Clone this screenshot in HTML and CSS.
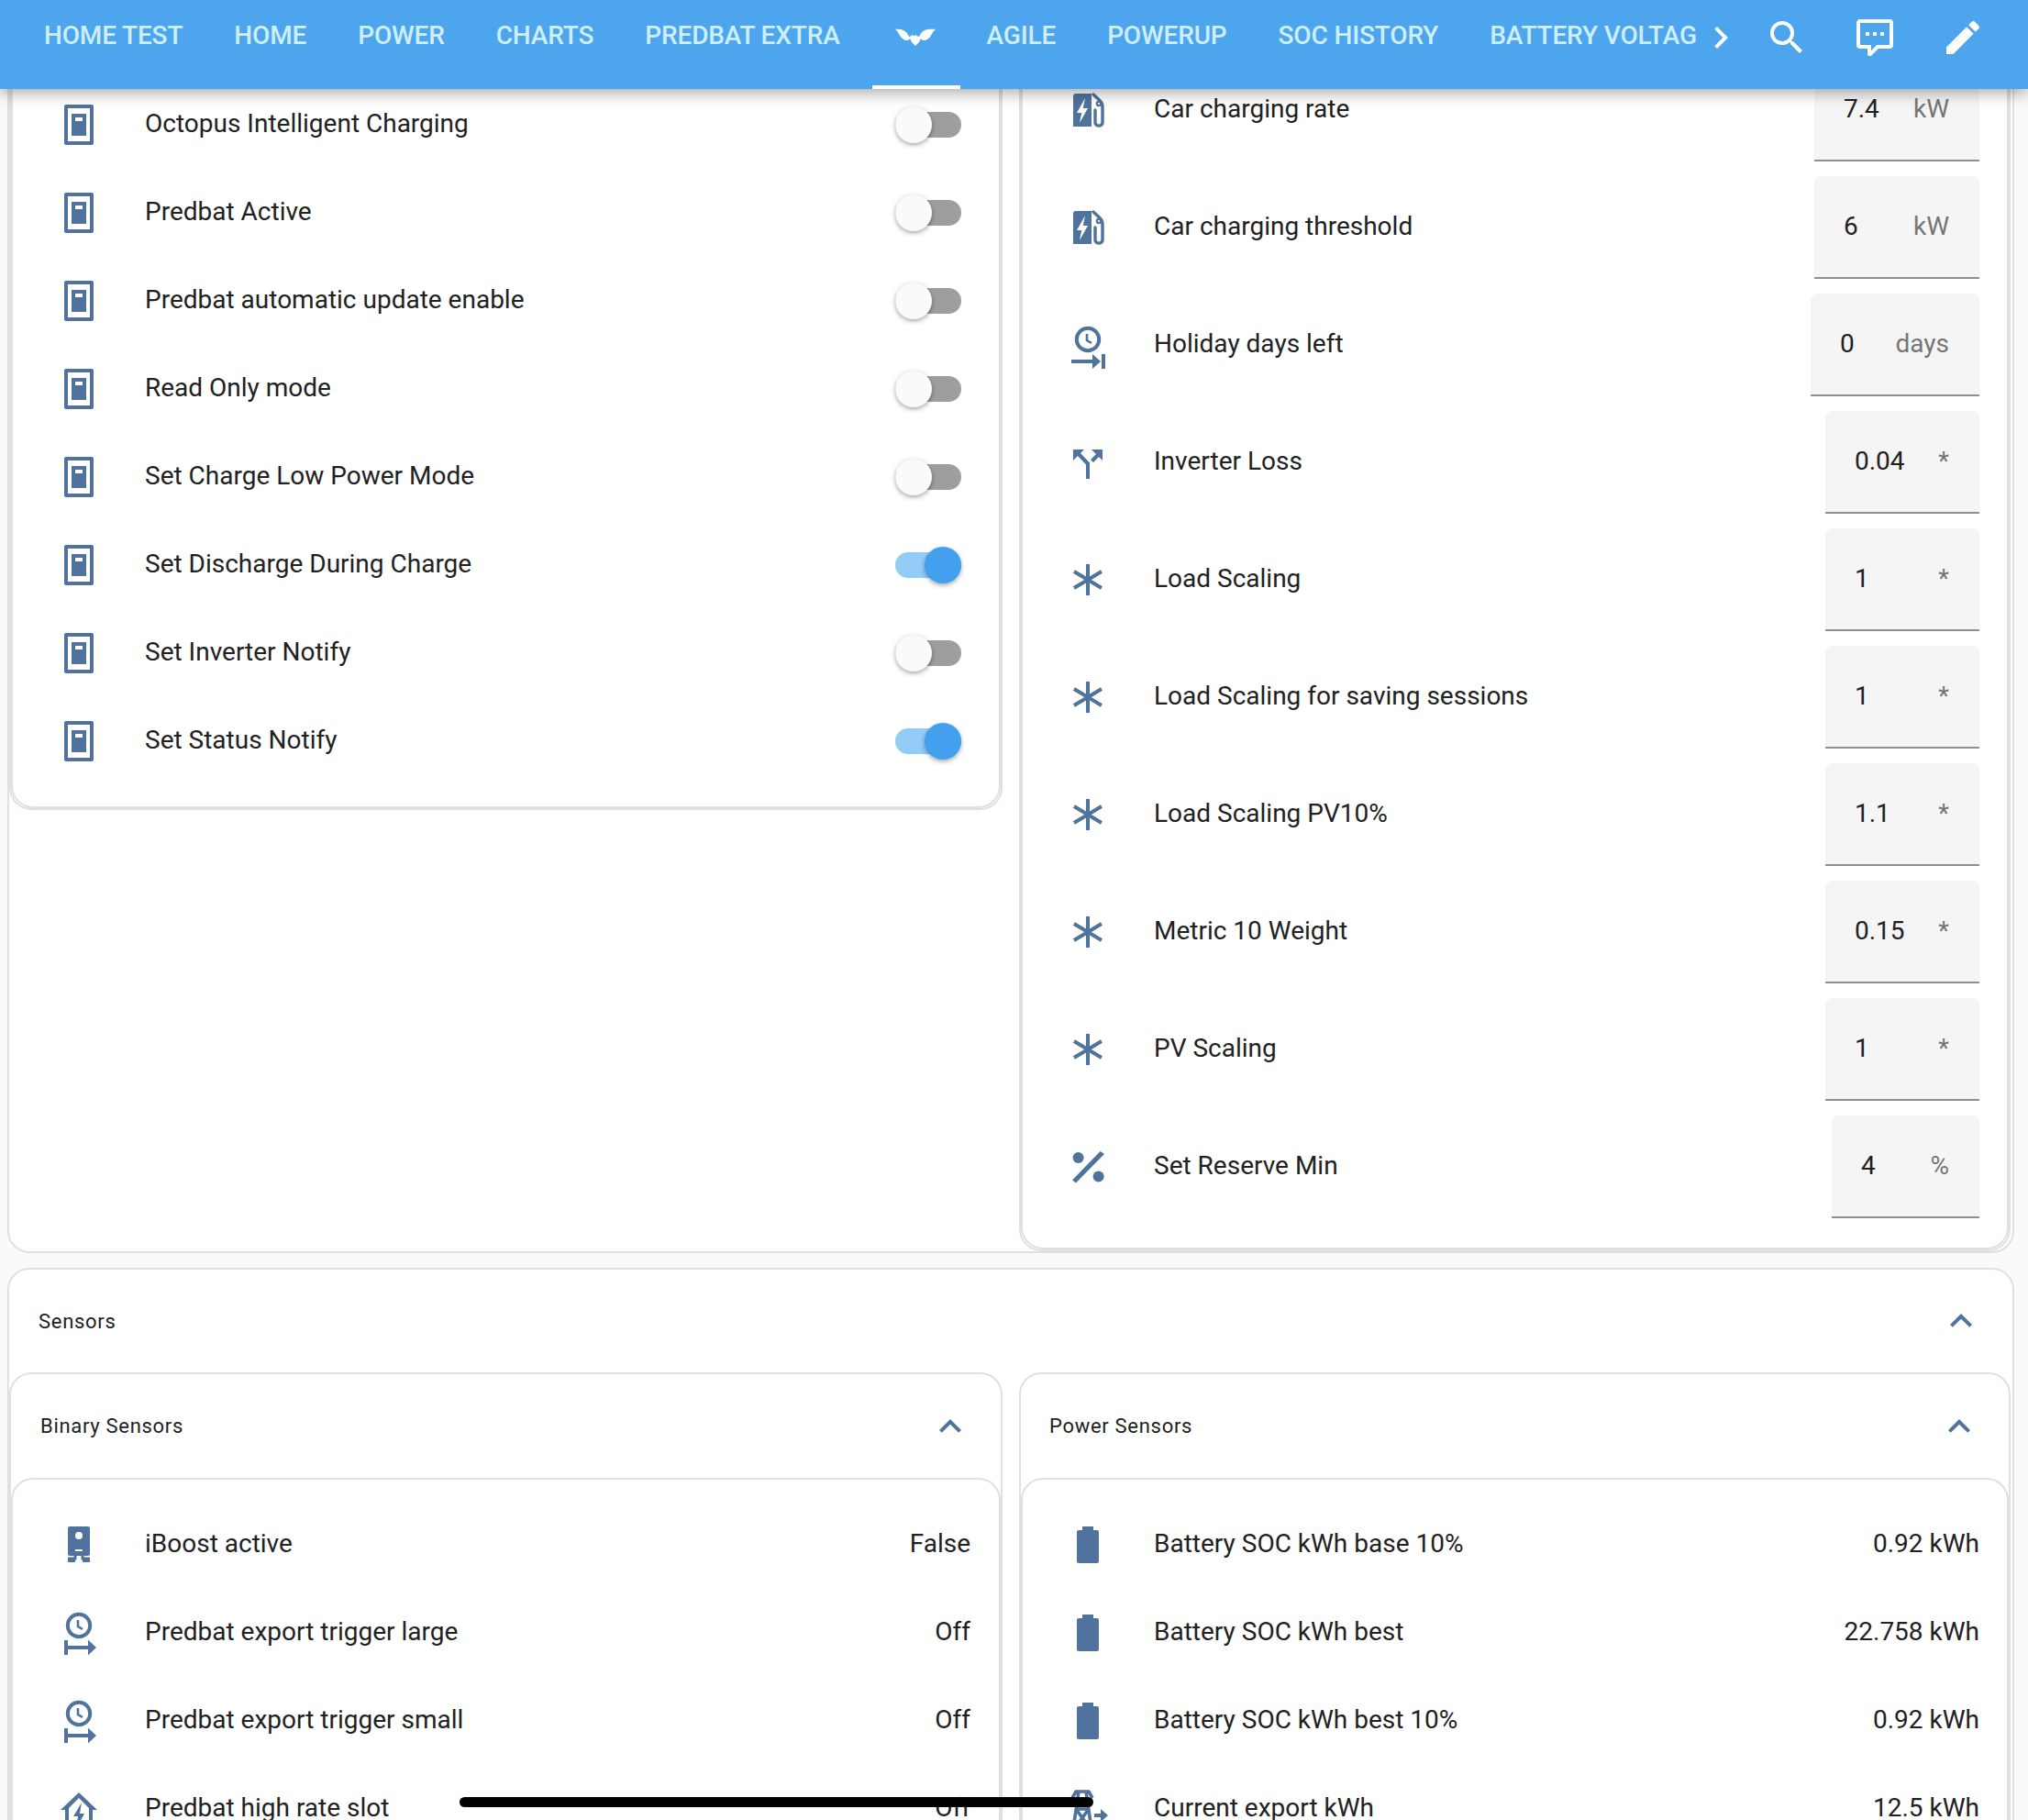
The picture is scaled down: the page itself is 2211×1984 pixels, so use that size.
FILE: index.html
```html
<!DOCTYPE html>
<html lang="en">
<head>
<meta charset="utf-8">
<title>Predbat</title>
<link rel="stylesheet" href="styles.css">
</head>
<body>
<svg class="defs" width="0" height="0" aria-hidden="true">
  <symbol id="i-switch" viewBox="0 0 24 24">
    <path fill-rule="evenodd" d="M5 1h14a1 1 0 0 1 1 1v20a1 1 0 0 1-1 1H5a1 1 0 0 1-1-1V2a1 1 0 0 1 1-1zm1 2v18h12V3zM8 6h8v12H8zm2 2v2h4V8z"/>
  </symbol>
  <symbol id="i-ev" viewBox="0 0 24 24">
    <path fill-rule="evenodd" d="M5.500 3H14v18H4V4.500A1.500 1.500 0 0 1 5.500 3zM10.500 5.500L6 13.500H8.600L7.500 19 12 11H9.400z"/>
    <path fill="none" stroke="currentColor" stroke-width="1.700" stroke-linecap="round" d="M15 3.500l3.500 3.200c1 1 1.500 1.800 1.500 3v9c0 2.500-4 2.500-4 0v-6.700"/>
    <circle cx="18" cy="8.500" r="1.100" fill="none" stroke="currentColor" stroke-width="1.100"/>
  </symbol>
  <symbol id="i-clock-in" viewBox="0 0 24 24" overflow="visible">
    <circle cx="12" cy="9" r="6.100" fill="none" stroke="currentColor" stroke-width="2"/>
    <path fill="none" stroke="currentColor" stroke-width="1.300" d="M11.500 6v3.500l2.500 1.500"/>
    <path d="M3 20h11.500v-3l4.500 4-4.500 4v-3H3zM19.500 17h2v8h-2z"/>
  </symbol>
  <symbol id="i-clock-out" viewBox="0 0 24 24" overflow="visible">
    <circle cx="12" cy="9" r="6.100" fill="none" stroke="currentColor" stroke-width="2"/>
    <path fill="none" stroke="currentColor" stroke-width="1.300" d="M11.500 6v3.500l2.500 1.500"/>
    <path d="M4 17h2v3h11v-3.200l4.500 4.200-4.500 4.200V22H6v3H4z"/>
  </symbol>
  <symbol id="i-split" viewBox="0 0 24 24">
    <path d="M4 5h6L8 7l5 5.300V21h-2v-7.800L6.500 8.500 4 11zM14 5h6v6l-2-2-3 3-1.500-1.500 3-3z"/>
  </symbol>
  <symbol id="i-star" viewBox="0 0 24 24">
    <path fill="none" stroke="currentColor" stroke-width="2" d="M12 3.500v17M4.500 7.500l15 9M19.500 7.500l-15 9"/>
  </symbol>
  <symbol id="i-percent" viewBox="0 0 24 24">
    <circle cx="6.800" cy="7" r="3"/>
    <circle cx="17.800" cy="17.300" r="3"/>
    <path d="M18.800 3.500L21 5 5.500 20.800 3.500 19.200z"/>
  </symbol>
  <symbol id="i-boost" viewBox="0 0 24 24">
    <path fill-rule="evenodd" d="M7 3h10a1 1 0 0 1 1 1v14a1 1 0 0 1-1 1H7a1 1 0 0 1-1-1V4a1 1 0 0 1 1-1zm5 3a2 2 0 1 0 0 4 2 2 0 0 0 0-4zm-2 9.500v1h4v-1z"/>
    <path fill="none" stroke="currentColor" stroke-width="1.500" d="M10 19v1.500H6M14 19v1.500h4"/>
    <path d="M6 20.500h4v2H6zM14 20.500h4v2h-4z"/>
  </symbol>
  <symbol id="i-battery" viewBox="0 0 24 24">
    <path d="M9 3h6v2h2a1 1 0 0 1 1 1v16a1 1 0 0 1-1 1H7a1 1 0 0 1-1-1V6a1 1 0 0 1 1-1h2z"/>
  </symbol>
  <symbol id="i-homebolt" viewBox="0 0 24 24">
    <path fill-rule="evenodd" d="M12 4l10 9.500h-2.500V24h-2V12.500L12 7 6.500 12.500V24h-2V13.500H2z"/>
    <path d="M13.500 9.500L9 17h2.500l-1 7L15 15.500h-2.500z"/>
  </symbol>
  <symbol id="i-tower" viewBox="0 0 24 24">
    <path fill="none" stroke="currentColor" stroke-width="1.800" d="M3.500 7l2-3.500h7l2 3.500M7 3.500L4 24M11 3.500L14 24M5.500 13h7M4.500 24l8-11M13.500 24l-8-11"/>
    <path d="M15.500 15.500h3.500v-2.500l4 3.500-4 3.500v-2.500h-3.500z"/>
  </symbol>
</svg>

<div class="view">
  <header class="topbar">
    <nav class="tabs">
      <a class="tab">Home Test</a>
      <a class="tab">Home</a>
      <a class="tab">Power</a>
      <a class="tab">Charts</a>
      <a class="tab">Predbat Extra</a>
      <a class="tab tab-icon">
        <svg class="ico48" viewBox="0 0 48 48"><path fill="#fff" d="M1 15q7-1 11 1 4 2 6 7l3-1 .8-2 .7 2h2l.8-2 .7 2 3 1q2-5 6-7 4-2 12-1-2 1-4 5-3 6-8 7-3 .5-4-2l-2 4-4 4-4-4-2-4q-1 2.500-4 2-5-1-8-7-2-4-4-5z"/></svg>
      </a>
      <a class="tab">Agile</a>
      <a class="tab">PowerUp</a>
      <a class="tab">SOC History</a>
      <a class="tab">Battery Voltag</a>
    </nav>
    <button class="scroll-btn"><svg class="ico48" viewBox="0 0 24 24"><path d="M8.590,16.580L13.170,12L8.590,7.410L10,6L16,12L10,18L8.590,16.580Z"/></svg></button>
    <button class="act-btn"><svg class="ico48" viewBox="0 0 24 24"><path d="M9.500,3A6.500,6.500 0 0,1 16,9.500C16,11.110 15.410,12.590 14.440,13.730L14.710,14H15.500L20.500,19L19,20.500L14,15.500V14.710L13.730,14.440C12.590,15.410 11.110,16 9.500,16A6.500,6.500 0 0,1 3,9.500A6.500,6.500 0 0,1 9.500,3M9.500,5C7,5 5,7 5,9.500C5,12 7,14 9.500,14C12,14 14,12 14,9.500C14,7 12,5 9.500,5Z"/></svg></button>
    <button class="act-btn"><svg class="ico48" viewBox="0 0 24 24"><path d="M9,22A1,1 0 0,1 8,21V18H4A2,2 0 0,1 2,16V4C2,2.890 2.900,2 4,2H20A2,2 0 0,1 22,4V16A2,2 0 0,1 20,18H13.900L10.200,21.710C10,21.900 9.750,22 9.500,22V22H9M10,16V19.080L13.080,16H20V4H4V16H10M17,11V9H15V11H17M13,11V9H11V11H13M9,11V9H7V11H9Z"/></svg></button>
    <button class="act-btn"><svg class="ico48" viewBox="0 0 24 24"><path d="M20.710,7.040C21.100,6.650 21.100,6 20.710,5.630L18.370,3.290C18,2.900 17.350,2.900 16.960,3.290L15.120,5.120L18.870,8.870M3,17.250V21H6.750L17.810,9.930L14.060,6.180L3,17.250Z"/></svg></button>
  </header>

  <main class="stack">
    <section class="card card-controls">
      <div class="cols">
        <div class="sub sub-left">
          <div class="entities entities-switches">
            <div class="row"><svg class="ico"><use href="#i-switch"/></svg><span class="name">Octopus Intelligent Charging</span><span class="toggle"></span></div>
            <div class="row"><svg class="ico"><use href="#i-switch"/></svg><span class="name">Predbat Active</span><span class="toggle"></span></div>
            <div class="row"><svg class="ico"><use href="#i-switch"/></svg><span class="name">Predbat automatic update enable</span><span class="toggle"></span></div>
            <div class="row"><svg class="ico"><use href="#i-switch"/></svg><span class="name">Read Only mode</span><span class="toggle"></span></div>
            <div class="row"><svg class="ico"><use href="#i-switch"/></svg><span class="name">Set Charge Low Power Mode</span><span class="toggle"></span></div>
            <div class="row"><svg class="ico"><use href="#i-switch"/></svg><span class="name">Set Discharge During Charge</span><span class="toggle on"></span></div>
            <div class="row"><svg class="ico"><use href="#i-switch"/></svg><span class="name">Set Inverter Notify</span><span class="toggle"></span></div>
            <div class="row"><svg class="ico"><use href="#i-switch"/></svg><span class="name">Set Status Notify</span><span class="toggle on"></span></div>
          </div>
        </div>
        <div class="sub sub-right">
          <div class="entities entities-numbers">
            <div class="row row-num"><svg class="ico"><use href="#i-ev"/></svg><span class="name">Car charging rate</span><span class="field f-kw"><span>7.4</span><span class="unit">kW</span></span></div>
            <div class="row row-num"><svg class="ico"><use href="#i-ev"/></svg><span class="name">Car charging threshold</span><span class="field f-kw"><span>6</span><span class="unit">kW</span></span></div>
            <div class="row row-num"><svg class="ico"><use href="#i-clock-in"/></svg><span class="name">Holiday days left</span><span class="field f-days"><span>0</span><span class="unit">days</span></span></div>
            <div class="row row-num"><svg class="ico"><use href="#i-split"/></svg><span class="name">Inverter Loss</span><span class="field f-star"><span>0.04</span><span class="unit">*</span></span></div>
            <div class="row row-num"><svg class="ico"><use href="#i-star"/></svg><span class="name">Load Scaling</span><span class="field f-star"><span>1</span><span class="unit">*</span></span></div>
            <div class="row row-num"><svg class="ico"><use href="#i-star"/></svg><span class="name">Load Scaling for saving sessions</span><span class="field f-star"><span>1</span><span class="unit">*</span></span></div>
            <div class="row row-num"><svg class="ico"><use href="#i-star"/></svg><span class="name">Load Scaling PV10%</span><span class="field f-star"><span>1.1</span><span class="unit">*</span></span></div>
            <div class="row row-num"><svg class="ico"><use href="#i-star"/></svg><span class="name">Metric 10 Weight</span><span class="field f-star"><span>0.15</span><span class="unit">*</span></span></div>
            <div class="row row-num"><svg class="ico"><use href="#i-star"/></svg><span class="name">PV Scaling</span><span class="field f-star"><span>1</span><span class="unit">*</span></span></div>
            <div class="row row-num"><svg class="ico"><use href="#i-percent"/></svg><span class="name">Set Reserve Min</span><span class="field f-pct"><span>4</span><span class="unit">%</span></span></div>
          </div>
        </div>
      </div>
    </section>

    <section class="card">
      <div class="card-head">
        <span class="title">Sensors</span>
        <svg class="ico chev" viewBox="0 0 24 24"><path d="M7.410,15.410L12,10.830L16.590,15.410L18,14L12,8L6,14L7.410,15.410Z"/></svg>
      </div>
      <div class="cols">
        <div class="sub sub-left">
          <div class="sub-head">
            <span class="title">Binary Sensors</span>
            <svg class="ico chev" viewBox="0 0 24 24"><path d="M7.410,15.410L12,10.830L16.590,15.410L18,14L12,8L6,14L7.410,15.410Z"/></svg>
          </div>
          <div class="entities entities-sensors">
            <div class="row"><svg class="ico"><use href="#i-boost"/></svg><span class="name">iBoost active</span><span class="val">False</span></div>
            <div class="row"><svg class="ico"><use href="#i-clock-out"/></svg><span class="name">Predbat export trigger large</span><span class="val">Off</span></div>
            <div class="row"><svg class="ico"><use href="#i-clock-out"/></svg><span class="name">Predbat export trigger small</span><span class="val">Off</span></div>
            <div class="row"><svg class="ico"><use href="#i-homebolt"/></svg><span class="name">Predbat high rate slot</span><span class="val">Off</span></div>
          </div>
        </div>
        <div class="sub sub-right">
          <div class="sub-head">
            <span class="title">Power Sensors</span>
            <svg class="ico chev" viewBox="0 0 24 24"><path d="M7.410,15.410L12,10.830L16.590,15.410L18,14L12,8L6,14L7.410,15.410Z"/></svg>
          </div>
          <div class="entities entities-sensors">
            <div class="row"><svg class="ico"><use href="#i-battery"/></svg><span class="name">Battery SOC kWh base 10%</span><span class="val">0.92 kWh</span></div>
            <div class="row"><svg class="ico"><use href="#i-battery"/></svg><span class="name">Battery SOC kWh best</span><span class="val">22.758 kWh</span></div>
            <div class="row"><svg class="ico"><use href="#i-battery"/></svg><span class="name">Battery SOC kWh best 10%</span><span class="val">0.92 kWh</span></div>
            <div class="row"><svg class="ico"><use href="#i-tower"/></svg><span class="name">Current export kWh</span><span class="val">12.5 kWh</span></div>
          </div>
        </div>
      </div>
    </section>
  </main>

  <div class="home-indicator"></div>
</div>
</body>
</html>
```

FILE: styles.css
```css
* { box-sizing: border-box; }

html, body {
  margin: 0;
  padding: 0;
  background: #fafafa;
}

body {
  font-family: Roboto, "Liberation Sans", sans-serif;
  font-size: 28px;
  color: #212121;
}

.defs { position: absolute; }

.view {
  position: relative;
  width: 2211px;
  height: 1984px;
  overflow: hidden;
}

/* top bar */
.topbar {
  position: absolute;
  top: 0;
  left: 0;
  right: 0;
  z-index: 5;
  height: 97px;
  display: flex;
  padding-left: 20px;
  background: #4da6ed;
  box-shadow: 0 4px 16px rgba(0, 0, 0, .35);
}

.tabs {
  flex: 1;
  min-width: 0;
  display: flex;
  overflow: hidden;
  white-space: nowrap;
}

.tab {
  flex: none;
  height: 97px;
  padding: 0 28px;
  line-height: 78px;
  font-size: 28px;
  font-weight: 500;
  letter-spacing: -.15px;
  text-transform: uppercase;
  color: #cdeefc;
}

.tab-icon {
  width: 96px;
  padding: 17px 26px 0 22px;
  margin: 0 1px 0 7px;
  border-bottom: 4px solid #fff;
  line-height: 0;
}

.ico48 {
  display: block;
  width: 48px;
  height: 48px;
  fill: #fff;
}

.scroll-btn,
.act-btn {
  flex: none;
  display: flex;
  justify-content: center;
  align-items: flex-start;
  height: 97px;
  padding: 17px 0 0;
  border: 0;
  background: none;
}

.scroll-btn { width: 48px; }
.act-btn { width: 96px; }
.topbar > .act-btn:last-child { margin-right: 23px; }

/* cards */
.stack {
  display: flex;
  flex-direction: column;
  gap: 16px;
  margin: -60px 15px 0 8px;
}

.card {
  border: 2px solid #e0e0e0;
  border-radius: 24px;
  background: #fff;
}

.card-controls {
  padding-top: 18px;
  height: 1426px;
}

.card-head {
  display: flex;
  align-items: center;
  justify-content: space-between;
  height: 112px;
  padding: 0 32px;
}

.title {
  font-size: 22px;
  letter-spacing: .7px;
}

.cols {
  display: grid;
  grid-template-columns: 1083px 1081px;
  gap: 18px;
  align-items: start;
}

.card-controls .cols { height: 100%; }

.sub {
  border: 2px solid #e0e0e0;
  border-radius: 24px;
  background: #fff;
}

.sub-head {
  display: flex;
  align-items: center;
  justify-content: space-between;
  height: 113px;
}

.sub-left .sub-head { padding: 0 31px 0 32px; }
.sub-right .sub-head { padding: 0 30px 0 31px; }

.entities {
  border: 2px solid #e0e0e0;
  border-radius: 24px;
  background: #fff;
}

.sub-left .entities { padding-left: 48px; padding-right: 31px; }
.sub-right .entities { padding-left: 47px; padding-right: 30px; }

.entities-switches { padding-top: 124px; padding-bottom: 23px; }
.entities-numbers { padding-top: 92px; padding-bottom: 24px; }
.entities-sensors { padding-top: 21px; padding-bottom: 21px; }

.row {
  display: flex;
  align-items: center;
  height: 96px;
}

.row-num { height: 128px; }

.ico {
  flex: none;
  width: 48px;
  height: 48px;
  fill: #4f739c;
  color: #4f739c;
  overflow: visible;
}

.name {
  flex: 1;
  min-width: 0;
  margin: -3px 0 0 48px;
  white-space: nowrap;
}

.entities-sensors .name { margin-top: 0; }

.chev { margin-left: auto; }

/* switch */
.toggle {
  position: relative;
  flex: none;
  width: 72px;
  height: 28px;
  margin-right: 10px;
  border-radius: 14px;
  background: #9e9e9e;
}

.toggle::after {
  content: "";
  position: absolute;
  left: 0;
  top: -6px;
  width: 40px;
  height: 40px;
  border-radius: 50%;
  background: #fafafa;
  box-shadow: 0 2px 5px rgba(0, 0, 0, .35);
}

.toggle.on { background: #93ccf6; }

.toggle.on::after {
  left: auto;
  right: 0;
  background: #42a0ee;
}

/* number field */
.field {
  flex: none;
  display: flex;
  align-items: center;
  justify-content: space-between;
  height: 112px;
  padding: 0 33px 1px 32px;
  border-bottom: 2px solid #8f8f8f;
  border-radius: 8px 8px 0 0;
  background: #f5f5f5;
}

.f-kw { width: 180px; }
.f-days { width: 184px; }
.f-star { width: 168px; }
.f-pct { width: 161px; }

.unit { color: #757575; }

/* phone home bar */
.home-indicator {
  position: absolute;
  left: 501px;
  top: 1959px;
  z-index: 6;
  width: 691px;
  height: 11px;
  border-radius: 6px;
  background: #000;
}
```
